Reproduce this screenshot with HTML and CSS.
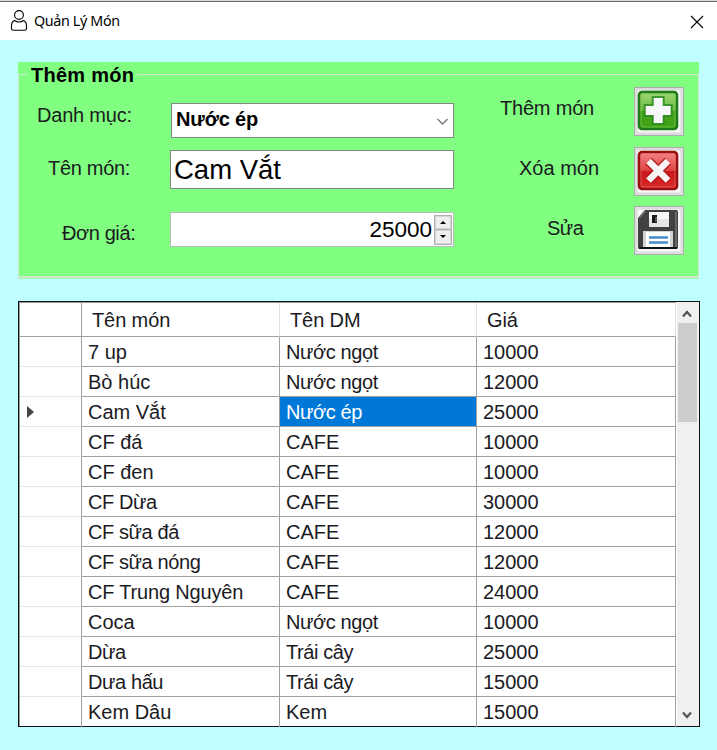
FILE: index.html
```html
<!DOCTYPE html>
<html lang="vi">
<head>
<meta charset="utf-8">
<title>Quản Lý Món</title>
<link rel="stylesheet" href="styles.css">
</head>
<body>
<header class="titlebar">
  <svg class="user-icon" width="18" height="22" viewBox="0 0 18 22" fill="none" stroke="#000" stroke-width="1.1"><circle cx="9" cy="5" r="4.4"/><path d="M4.500 10.500 Q9 13.500 13.500 10.500 Q16.500 11.500 16.500 16 V18.500 Q16.500 20.300 14.500 20.300 H3.500 Q1.500 20.300 1.500 18.500 V16 Q1.500 11.500 4.500 10.500Z"/></svg>
  <h1 class="title">Quản Lý Món</h1>
  <svg class="close" width="14" height="14" viewBox="0 0 14 14" stroke="#000" stroke-width="1.1"><path d="M1 1 13 13M13 1 1 13"/></svg>
</header>
<main class="window">
  <section class="panel">
    <div class="legend"><span>Thêm món</span></div>
    <div class="panel-body">
      <div class="fields">
        <div class="field field-category"><label>Danh mục:</label><div class="control combo"><span>Nước ép</span><svg width="13" height="8" viewBox="0 0 13 8" fill="none" stroke="#777" stroke-width="1.3"><path d="M1.500 1 6.500 6 11.500 1"/></svg></div></div>
        <div class="field field-name"><label>Tên món:</label><div class="control textbox"><span>Cam Vắt</span></div></div>
        <div class="field field-price"><label>Đơn giá:</label><div class="control number"><span>25000</span>
          <div class="spinner"><i><svg width="6" height="3"><path d="M3 0 6 3H0Z"/></svg></i><i><svg width="6" height="3"><path d="M0 0H6L3 3Z"/></svg></i></div></div></div>
      </div>
      <div class="actions">
        <div class="action action-add"><span>Thêm món</span><div class="btn">
          <svg width="47" height="47" viewBox="0 0 47 47">
            <defs><linearGradient id="green" x2="0" y2="1"><stop offset="0" stop-color="#a2d879"/><stop offset=".5" stop-color="#68b83e"/><stop offset=".52" stop-color="#43a01c"/><stop offset="1" stop-color="#3fa515"/></linearGradient></defs>
            <path class="gloss" d="M2 2H46V45H2Z"/>
            <rect x="4" y="4" width="38" height="37" rx="3" fill="url(#green)" stroke="#1f7a1a" stroke-width="2.600"/>
            <rect x="6" y="6" width="34" height="33" rx="2" fill="none" stroke="#7cc857" opacity=".7"/>
            <path d="M18.700 10h9v8h8v9h-8v8h-9v-8h-8v-9h8z" fill="none" stroke="#2d8a22" stroke-width="4" opacity=".8"/>
            <path d="M18.700 10h9v8h8v9h-8v8h-9v-8h-8v-9h8z" fill="#f8f8fa"/>
          </svg></div></div>
        <div class="action action-delete"><span>Xóa món</span><div class="btn">
          <svg width="47" height="47" viewBox="0 0 47 47">
            <defs><linearGradient id="red" x2="0" y2="1"><stop offset="0" stop-color="#f48786"/><stop offset=".5" stop-color="#df4142"/><stop offset=".52" stop-color="#c9191b"/><stop offset="1" stop-color="#d9282a"/></linearGradient></defs>
            <path class="gloss" d="M2 2H46V45H2Z"/>
            <rect x="4" y="4" width="38" height="37" rx="3" fill="url(#red)" stroke="#980f0f" stroke-width="2.600"/>
            <rect x="6" y="6" width="34" height="33" rx="2" fill="none" stroke="#ed7776" opacity=".6"/>
            <path d="M13.500 13 33 32.500M33 13 13.500 32.500" stroke="#b51719" stroke-width="9"/>
            <path d="M13.500 13 33 32.500M33 13 13.500 32.500" stroke="#f7f5f5" stroke-width="6.600"/>
          </svg></div></div>
        <div class="action action-edit"><span>Sửa</span><div class="btn">
          <svg width="47" height="47" viewBox="0 0 47 47">
            <path class="gloss" d="M2 2H46V45H2Z"/>
            <path d="M10 3H41Q43 3 43 5V40Q43 42 41 42H5Q3 42 3 40V11Z" fill="#404143"/>
            <path d="M4 11 10 4M41 5V40" stroke="#737476" stroke-width="1.500"/>
            <path d="M4 41H42" stroke="#111" stroke-width="2"/>
            <path d="M14 5H34V20H14Z" fill="#e6e6e6"/><path d="M14 5H34V12H14Z" fill="#f6f6f6"/>
            <path d="M17 8H22V16H17Z" fill="#17181a"/><path d="M20 10h2v5h-2z" fill="#555"/>
            <path d="M8 24H38V40H8Z" fill="#d2d3d4"/><path d="M11 25H35V40H11Z" fill="#fff"/>
            <path d="M14 30.500H33M14 35.500H33" stroke="#478bc8" stroke-width="2.400"/>
          </svg></div></div>
      </div>
    </div>
  </section>
  <section class="grid">
    <div class="rows">
      <div class="row head"><b></b><span>Tên món</span><span>Tên DM</span><span>Giá</span></div>
      <div class="row"><b></b><span>7 up</span><span class="tight">Nước ngọt</span><span>10000</span></div>
      <div class="row"><b></b><span>Bò húc</span><span class="tight">Nước ngọt</span><span>12000</span></div>
      <div class="row"><b><svg width="7" height="12"><path d="M0 0 7 6 0 12Z" fill="#444"/></svg></b><span>Cam Vắt</span><span class="selected tight">Nước ép</span><span>25000</span></div>
      <div class="row"><b></b><span>CF đá</span><span>CAFE</span><span>10000</span></div>
      <div class="row"><b></b><span>CF đen</span><span>CAFE</span><span>10000</span></div>
      <div class="row"><b></b><span class="tight">CF Dừa</span><span>CAFE</span><span>30000</span></div>
      <div class="row"><b></b><span class="tight">CF sữa đá</span><span>CAFE</span><span>12000</span></div>
      <div class="row"><b></b><span class="tight">CF sữa nóng</span><span>CAFE</span><span>12000</span></div>
      <div class="row"><b></b><span class="snug">CF Trung Nguyên</span><span>CAFE</span><span>24000</span></div>
      <div class="row"><b></b><span>Coca</span><span class="tight">Nước ngọt</span><span>10000</span></div>
      <div class="row"><b></b><span class="tight">Dừa</span><span class="tight">Trái cây</span><span>25000</span></div>
      <div class="row"><b></b><span class="tight">Dưa hấu</span><span class="tight">Trái cây</span><span>15000</span></div>
      <div class="row"><b></b><span>Kem Dâu</span><span>Kem</span><span>15000</span></div>
    </div>
    <div class="scrollbar">
      <svg width="10" height="8" viewBox="0 0 10 8" fill="none" stroke="#555" stroke-width="2.200"><path d="M1 6.500 5 2 9 6.500"/></svg>
      <div class="thumb"></div>
      <svg class="down" width="10" height="8" viewBox="0 0 10 8" fill="none" stroke="#555" stroke-width="2.200"><path d="M1 1.500 5 6 9 1.500"/></svg>
    </div>
  </section>
</main>
</body>
</html>
```

FILE: styles.css
```css
* { box-sizing: border-box; }
body { margin: 0; height: 750px; overflow: hidden; background: #c0ffff; color: #1b1b1f; font: 20px/24px "Liberation Sans", Arial, sans-serif; }
svg { display: block; flex: none; }
.titlebar { height: 40px; display: flex; align-items: center; padding: 0 14px 0 10px; background: #fff; border-top: 1px solid #d9d9d9; box-shadow: inset 0 1px #666; }
.title { margin: 0 auto 0 6px; font: 14.3px/20px "Noto Sans", sans-serif; color: #000; letter-spacing: -.35px; }
.close { margin-top: 2px; margin-right: -1px; }
.window { padding: 22px 18px 0; }
.panel { height: 217px; background: #80ff80; display: flex; flex-direction: column; border-bottom: 1px solid #9df5a6; }
.legend { height: 12px; line-height: 25px; padding-left: 9px; font-weight: bold; color: #000; white-space: nowrap; letter-spacing: .25px; }
.legend span { position: relative; display: inline-block; background: #80ff80; height: 25px; padding: 0 3px 0 4px; margin-top: 1px; }
.panel-body { flex: 1; display: flex; border: 1px solid #d3e7d3; border-bottom-width: 2px; }
.fields { width: 435px; padding-top: 28px; }
.field { display: flex; }
.field label { width: 151px; flex: none; letter-spacing: -.2px; }
.field-category label { padding-left: 18px; }
.field-name label { padding-left: 29px; letter-spacing: -.3px; }
.field-price label { padding-left: 43px; letter-spacing: -.4px; }
.control { display: flex; align-items: center; flex: 1; background: #fff; border: 1px solid #858585; color: #000; }
.combo { height: 35px; margin-left: 1px; padding: 0 4px 3px; justify-content: space-between; font-weight: bold; letter-spacing: -.15px; }
.combo svg { margin-top: 5px; }
.textbox { height: 39px; margin-top: 12px; padding-left: 3px; font-size: 27.500px; }
.number { height: 35px; margin-top: 23px; border-color: #b9b9b9; justify-content: flex-end; font-size: 22.500px; padding-right: 1px; }
.spinner { width: 18px; height: 30px; margin-left: 2px; display: grid; grid-template-rows: 1fr 1fr; border: 1px solid #b0b0b0; background: #b0b0b0; gap: 1px; }
.spinner i { display: flex; align-items: center; justify-content: center; background: #eee; border: 1px solid #d5d5d5; }
.field-category label { margin-top: 0; }
.field-name label { margin-top: 18px; }
.field-price label { margin-top: 32px; }
.actions { flex: 1; padding: 12px 14px 0 0; display: flex; flex-direction: column; gap: 11px; }
.action { display: flex; height: 49px; justify-content: space-between; align-items: center; }
.action-edit { margin-top: -1px; }
.action-add { padding-left: 46px; letter-spacing: -.2px; }
.action-delete { padding-left: 65px; }
.action-edit { padding-left: 93px; letter-spacing: -.5px; }
.action > span { margin-top: -8px; }
.action-edit > span { margin-top: -6px; }
.btn { width: 50px; height: 49px; background: #dedede; border: 1px solid #acacac; }
.gloss { fill: #f7f7f7; stroke: #d9d9d9; }
.grid { height: 426px; margin-top: 22px; border: 1px solid #111; display: flex; background: #fff; width: 682px; }
.rows { flex: 1; border: solid #999; border-width: 1px 0 0 1px; }
.row { display: grid; grid-template-columns: 62px 198px 197px 1fr; height: 30px; line-height: 31px; }
.row > * { border-right: 1px solid #a0a0a0; min-width: 0; }
.row > span { padding-left: 6px; border-bottom: 1px solid #a0a0a0; white-space: nowrap; height: 30px; }
.row > b { border-bottom: 1px solid #e5e5e5; display: flex; align-items: center; padding-left: 7px; height: 30px; }
.row.head { height: 34px; line-height: 34px; }
.head > span, .head > b { height: 34px; border-bottom-color: #a0a0a0; }
.head > span { padding-left: 10px; border-right-color: #e0e0e0; }
.head > span { letter-spacing: -.1px; }
.row:last-child > * { border-bottom: 0; }
.row .tight { letter-spacing: -.4px; }
.row .snug { letter-spacing: -.18px; }
.row .selected { background: #0078d7; color: #fff; }
.scrollbar { width: 23px; padding: 8px 2px 0 0; display: flex; flex-direction: column; align-items: center; background: #f0f0f0; border-left: 1px solid #fff; }
.thumb { width: 19px; height: 99px; margin-top: 5px; background: #cdcdcd; }
.down { margin-top: auto; margin-bottom: 7px; }
```
